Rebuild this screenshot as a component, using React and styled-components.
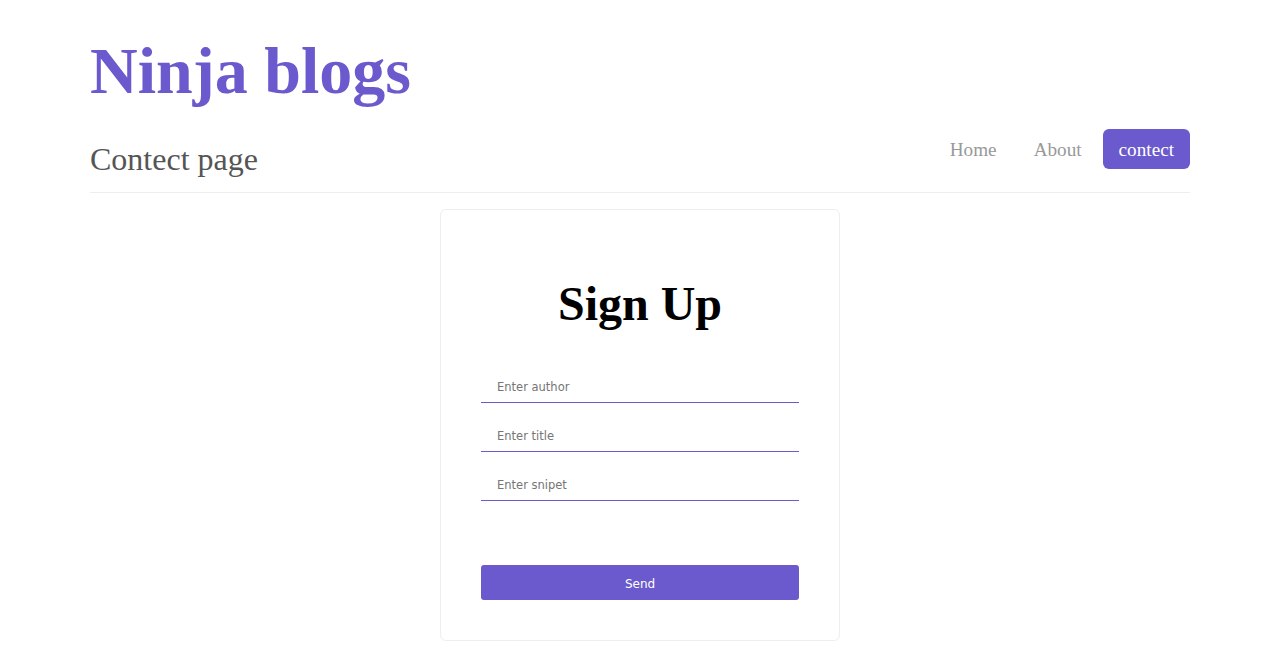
import React from 'react';
import styled, { createGlobalStyle } from 'styled-components';

const Global = createGlobalStyle`
  body {
    margin: 0;
    background: #fff;
    font-family: "Liberation Serif", "Times New Roman", serif;
  }
`;

const Page = styled.div`
  width: 1100px;
  margin: 0 auto;
`;
const Brand = styled.h1`
  margin: 33px 0 0;
  font-size: 66px;
  font-weight: bold;
  line-height: 76px;
  color: #6a5acd;
`;
const Bar = styled.div`
  display: flex;
  justify-content: space-between;
  align-items: flex-start;
  padding-bottom: 14px;
  border-bottom: 1px solid #eee;
`;
const PageTitle = styled.h2`
  margin: 32px 0 0;
  font-size: 32px;
  font-weight: normal;
  line-height: 37px;
  color: #555;
`;
const Nav = styled.nav`
  display: flex;
  gap: 5px;
  margin-top: 20px;
`;
const NavLink = styled.a`
  display: block;
  padding: 10px 16px 8px;
  font-size: 19.2px;
  line-height: 22px;
  border-radius: 6px;
  text-decoration: none;
  color: ${p => (p.$active ? '#fff' : '#999')};
  background: ${p => (p.$active ? '#6a5acd' : 'transparent')};
`;
const Card = styled.form`
  width: 400px;
  box-sizing: border-box;
  margin: 16px auto 0;
  padding: 40px;
  border: 1px solid #eee;
  border-radius: 6px;
  display: flex;
  flex-direction: column;
`;
const Heading = styled.h1`
  margin: 26px 0 38px;
  text-align: center;
  font-size: 48px;
  line-height: 55px;
  font-weight: bold;
  color: #000;
`;
const Field = styled.input`
  box-sizing: border-box;
  width: 100%;
  height: 34px;
  margin: 0 0 15px;
  padding: 2px 16px 0;
  border: none;
  border-bottom: 1px solid #6a5acd;
  outline: none;
  font-family: "DejaVu Sans", sans-serif;
  font-size: 11.5px;
  color: #333;
  &::placeholder {
    color: #757575;
  }
`;
const Send = styled.button`
  margin-top: 49px;
  height: 35px;
  width: 100%;
  padding: 2px 0 0;
  border: none;
  border-radius: 3px;
  background: #6a5acd;
  color: #fff;
  font-family: "DejaVu Sans", sans-serif;
  font-size: 12px;
`;

export default function App() {
  return (
    <>
      <Global />
      <Page>
        <Brand>Ninja blogs</Brand>
        <Bar>
          <PageTitle>Contect page</PageTitle>
          <Nav>
            <NavLink href="#">Home</NavLink>
            <NavLink href="#">About</NavLink>
            <NavLink href="#" $active>contect</NavLink>
          </Nav>
        </Bar>
        <Card onSubmit={e => e.preventDefault()}>
          <Heading>Sign Up</Heading>
          <Field placeholder="Enter author" />
          <Field placeholder="Enter title" />
          <Field placeholder="Enter snipet" />
          <Send type="submit">Send</Send>
        </Card>
      </Page>
    </>
  );
}
